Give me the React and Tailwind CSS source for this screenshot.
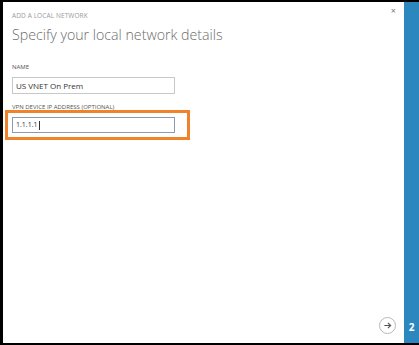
import React from "react";

const font = { fontFamily: '"Segoe UI", "Open Sans", "Noto Sans", sans-serif' };

export default function App() {
  return (
    <div
      className="w-[419px] h-[345px] bg-black pl-[3px] pt-[2px] pb-[2px] flex"
      style={font}
    >
      {/* main panel */}
      <div className="flex-1 bg-white flex flex-col relative">
        <div className="pl-[9px] pt-[10px]">
          <div className="text-[6.5px] tracking-[0.1px] text-[#9a9a9a] uppercase leading-[8px]">
            Add a local network
          </div>
          <h1 className="mt-[5px] text-[14.2px] font-light text-[#6b6b6b] leading-[20px]">
            Specify your local network details
          </h1>

          <div className="mt-[18px] text-[6px] text-[#555] uppercase leading-[8px]">
            Name
          </div>
          <div className="mt-[6px] w-[163px] h-[17px] border border-[#c8c8c8] flex items-center px-[3px] text-[8px] text-[#333]">
            US VNET On Prem
          </div>

          <div className="mt-[9px] text-[6px] text-[#555] uppercase leading-[8px]">
            VPN device IP address (optional)
          </div>
        </div>

        <div className="ml-[2px] -mt-[1px] w-[185px] border-[3px] border-[#f0822a] pl-[4px] py-[4px]">
          <div className="w-[163px] h-[16px] border border-[#8a9ab0] flex items-center px-[3px] text-[7px] text-[#333]">
            1.1.1.1<span className="ml-[1px] w-px h-[9px] bg-[#333]" />
          </div>
        </div>

        {/* close */}
        <div className="absolute right-[8px] top-[4px] text-[9px] text-[#777] leading-none">
          ×
        </div>

        {/* next arrow */}
        <div className="absolute right-[8px] bottom-[9px] w-[17px] h-[17px] rounded-full border border-[#b8b8b8] flex items-center justify-center">
          <svg width="9" height="9" viewBox="0 0 10 10">
            <path
              d="M1.5 5h7M5.5 2l3 3-3 3"
              fill="none"
              stroke="#555"
              strokeWidth="1.3"
            />
          </svg>
        </div>
      </div>

      {/* step bar */}
      <div className="w-[15px] bg-[#2b87bd] flex flex-col justify-end items-center pb-[11px]">
        <span className="text-white text-[10px] font-bold leading-none">2</span>
      </div>
    </div>
  );
}
